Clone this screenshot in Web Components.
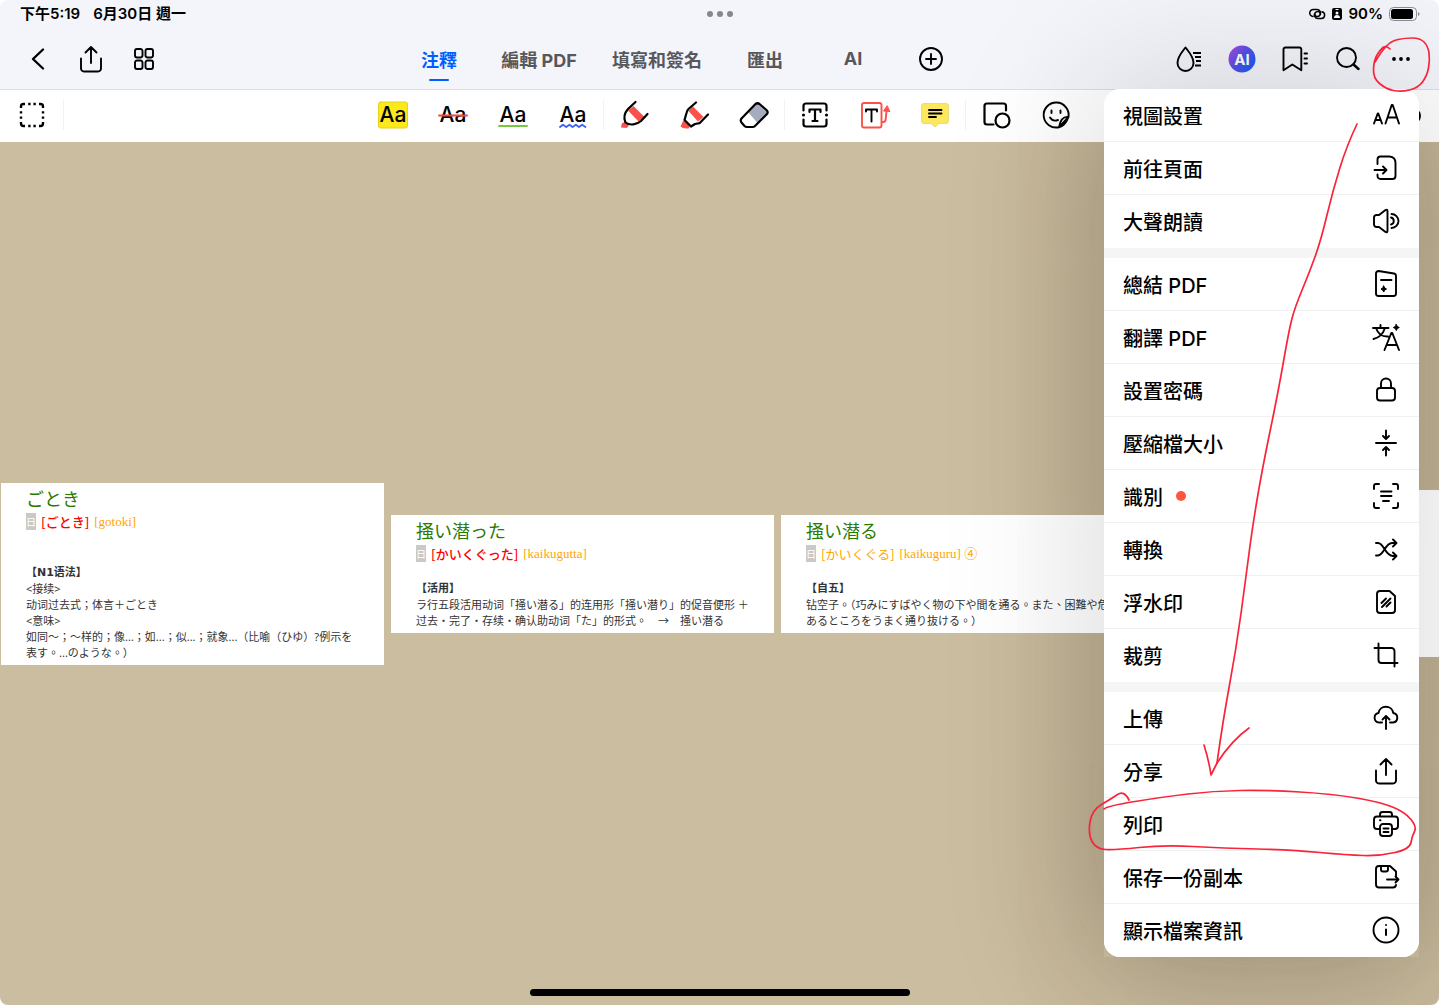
<!DOCTYPE html>
<html lang="zh-Hant">
<head>
<meta charset="utf-8">
<meta name="viewport" content="width=device-width, initial-scale=1">
<title>PDF</title>
<style>
  html, body{
    height: 100%;
    margin: 0;
  }

  body{
    background-color: hsl(0, 0%, 100%);
    color: hsl(0, 0%, 0%);
    font-family: Inter, "Noto Sans CJK TC", sans-serif;
  }
</style>
</head>
<body>

<lector-pdf>
  <barra-estado slot="cabecera"></barra-estado>
  <barra-navegacion slot="cabecera"></barra-navegacion>
  <barra-herramientas slot="cabecera"></barra-herramientas>

  <ficha-pagina palabra="ごとき" espacio="amplio">
    <b slot="lectura">[ごとき]</b>
    <span slot="romaji">[gotoki]</span>
    <strong>【N1语法】</strong><br>
    &lt;接续&gt;<br>
    动词过去式；体言＋ごとき<br>
    &lt;意味&gt;<br>
    如同～；～样的；像...；如...；似...；就象...（比喻（ひゆ）?例示を<br>
    表す。...のような。）
  </ficha-pagina>
  <ficha-pagina palabra="掻い潜った">
    <b slot="lectura">[かいくぐった]</b>
    <span slot="romaji">[kaikugutta]</span>
    <strong>【活用】</strong><br>
    ラ行五段活用动词「掻い潜る」的连用形「掻い潜り」的促音便形 ＋<br>
    过去・完了・存续・确认助动词「た」的形式。　→　掻い潜る
  </ficha-pagina>
  <ficha-pagina palabra="掻い潜る">
    <span slot="lectura">[かいくぐる]</span>
    <span slot="romaji">[kaikuguru] ④</span>
    <strong>【自五】</strong><br>
    钻空子。（巧みにすばやく物の下や間を通る。また、困難や危<br>
    あるところをうまく通り抜ける。）
  </ficha-pagina>
  <ficha-pagina vacia></ficha-pagina>

  <menu-opciones slot="encima"></menu-opciones>
  <trazo-rojo slot="encima"></trazo-rojo>
</lector-pdf>

<script>
// todos los iconos tienen el origen en el centro
const iconos = {
  atras: '<path stroke-width="2.4" d="M5-9.5-5 0 5 9.5"/>',
  compartir: '<path d="M-10-.5v10a3 3 0 0 0 3 3H7a3 3 0 0 0 3-3v-10M0 4v-16M-5.5-6.5 0-12l5.5 5.5"/>',
  cuadricula: '<rect x="-9" y="-10" width="7.5" height="8.5" rx="2"/><rect x="1.5" y="-10" width="7.5" height="8.5" rx="2"/><rect x="-9" y="1.5" width="7.5" height="8.5" rx="2"/><rect x="1.5" y="1.5" width="7.5" height="8.5" rx="2"/>',
  seleccion: '<path stroke-width="2.4" stroke-linecap="butt" d="M-11-7v-1.5A2.5 2.5 0 0 1-8.500-11H-7M7-11h1.500A2.500 2.500 0 0 1 11-8.500V-7M11 7v1.500A2.500 2.500 0 0 1 8.500 11H7M-7 11h-1.500A2.500 2.500 0 0 1-11 8.500V7M-3.800-11h2.400M1.400-11h2.400M-3.800 11h2.400M1.400 11h2.400M-11-3.800v2.400M-11 1.400v2.400M11-3.800v2.400M11 1.400v2.400"/>',
  resaltar: '<rect x="-14.5" y="-13" width="29" height="26" rx="2" fill="#fbe91c" stroke="#e3d21e" stroke-width="1"/><text y="7" font-size="21">Aa</text>',
  tachar: '<text y="7" font-size="21">Aa</text><path stroke="#f4473d" d="M-14 .5h28"/>',
  subrayar: '<text y="7" font-size="21">Aa</text><path stroke="#7ac63c" d="M-14 11h28"/>',
  ondular: '<text y="7" font-size="21">Aa</text><path stroke="#3d62f5" d="M-13 12l3-2.200 3.200 2.200 3.200-2.200L-.400 12l3.200-2.200L6 12l3.200-2.200 3.200 2.200"/>',
  rotulador: '<path fill="#f8524a" stroke="none" d="M-6-4.500-.500-9 10.500 2 4.500 6.500zM-13 12.500l.800-4 3-1.800 4 4-2.200 2.300z"/><path stroke-width="2.2" d="M1.500-13-6-6C-9.500-2-10.500 3-8.500 7.500-4 11 3 9.500 7 6l6.500-7"/>',
  marcador: '<path fill="#f8524a" stroke="none" d="M-5.500-4-1-8.500 9.500 2 4 6.500zM-13.500 11.500l2.800-6 6 4.500v3.200q-6 1-8.800-1.700z"/><path stroke-width="2.2" d="M2-12.500-5.500-6q-1.500 1.500-2 4L-9.500 5l6.500 6.500L1 9l4.500-.800L14-.500"/>',
  borrador: '<path fill="#a6acc0" stroke="none" d="M-6-3 4-12 14-2.500 3.500 8z"/><path stroke-width="2.2" d="M1.500-11q2-1.500 4 0l7 6q2 2 .500 4L1 11q-1 1-2.500 1H-7q-1.500 0-2.500-1l-3-3.500q-1.500-2 0-4z"/>',
  cuadroTexto: '<path stroke-width="2.2" d="M-11.500-4.500V-9a2.500 2.500 0 0 1 2.500-2.500H9A2.500 2.500 0 0 1 11.500-9v4.500M11.500 4.500V9A2.500 2.500 0 0 1 9 11.500H-9A2.500 2.500 0 0 1-11.500 9V4.500M-5.500-3v-2.500h11V-3M0-5.500v11.500M-2.500 6h5"/><circle cx="-11.500" r="1.600" fill="currentColor" stroke="none"/><circle cx="11.500" r="1.600" fill="currentColor" stroke="none"/>',
  llamada: '<path stroke="#f8524a" d="M-11-12H4.500a2 2 0 0 1 2 2v20.500a2 2 0 0 1-2 2H-11a2 2 0 0 1-2-2V-10a2 2 0 0 1 2-2zM7 7h1.500q2 0 2.200-3l.800-8"/><path fill="#f8524a" stroke="#f8524a" stroke-width="1" d="M12-9 8.500-4 14.500-3.500z"/><path d="M-9-3.500v-2H2v2M-3.500-5.500V6.500"/>',
  nota: '<path fill="#fde75c" stroke="#eadb7b" stroke-width="1" d="M-11-11.500h22a2.500 2.500 0 0 1 2.500 2.500V6A2.500 2.500 0 0 1 11 8.500H4L0 12l-4-3.500h-7A2.500 2.500 0 0 1-13.500 6V-9a2.500 2.500 0 0 1 2.500-2.500z"/><path d="M-6-5H6.500M-6-1.500H6.500M-6 2H1"/>',
  formas: '<path stroke-width="2.2" d="M-2.500 9.500H-9A2.500 2.500 0 0 1-11.500 7V-9A2.500 2.500 0 0 1-9-11.500H7.500A2.500 2.500 0 0 1 10-9v4.500"/><circle cx="6.500" cy="5.500" r="7" stroke-width="2.2"/>',
  pegatina: '<path d="M3 12.200A12.500 12.500 0 1 1 12.500 2M3 12.200 12.500 2Q5 1 3 12.200q6-1 9.500-10.200M-4.500-4.500v2.500M4.500-4.500v2.500M-6 2.500q3 4.500 8 2.500"/>',
  mas: '<circle r="11"/><path d="M-5 0H5M0-5V5"/>',
  gota: '<path d="M-3.500-11.500c3 4 8 9 8 15.500a8 8 0 0 1-16 0c0-6.500 5-11.500 8-15.500z"/><path stroke-linecap="butt" d="M4-6h8M6-2h6M7 2h5M6 6.500h6"/>',
  ia: '<circle r="13.500" fill="url(#g)" stroke="none"/><text y="5.500" font-size="15" style="fill:#fff;font-weight:700">AI</text>',
  marcapaginas: '<path d="M-9.500-11.500h14a1.800 1.800 0 0 1 1.800 1.800v21L-2.700 5.500l-8.800 5.800v-21a2 2 0 0 1 2-1.800z"/><path d="M9.500-5.500H12M9.500-.500H12M9.500 4.500H12"/>',
  buscar: '<circle cx="-1.500" cy="-1.500" r="9.500"/><path stroke-width="2.500" d="M5.500 5.500l5 4.500"/>',
  puntos: '<g fill="currentColor" stroke="none"><circle cx="-7" r="1.900"/><circle r="1.900"/><circle cx="7" r="1.900"/></g>',
  circulo: '<circle r="8"/>',
  letras: '<path d="M-12 8.500-8.300-1.500h.600L-4 8.500M-10.800 5h5.600M-.500 8.500 5.700-10h1L13 8.500M1.500 2.500H11"/>',
  irPagina: '<path d="M-8.500-4v-4.500a3 3 0 0 1 3-3h9Q9.500-11 9.500-5V8a3 3 0 0 1-3 3h-12a3 3 0 0 1-3-3V6.500M-11.500 2H.500M-3-1.500.500 2-3 5.500"/>',
  altavoz: '<path d="M-7-6h-2.500a2.500 2.500 0 0 0-2.500 2.500v7A2.500 2.500 0 0 0-9.500 6H-7l6.500 5Q1.500 12 1.500 9.500v-19Q1.500-12-.500-11zM5-3.500a3.600 3.600 0 0 1 0 7M5.500-7a7 7 0 0 1 0 14"/>',
  resumen: '<path d="M-7.500-13 8-10.500a2.500 2.500 0 0 1 2 2.500V9.500a2.500 2.500 0 0 1-2.500 2.500h-15a2.500 2.500 0 0 1-2.500-2.500v-20A2.500 2.500 0 0 1-7.500-13zM-5-4H5.500"/><path fill="currentColor" stroke-width="1" d="M-2.300 2-1.300 4 .500 5-1.300 6-2.300 8-3.300 6-5 5-3.300 4z"/>',
  traducir: '<path d="M-13-9H2.500M-5.500-12v3M-10-9Q-7 0 2-.500M-1-9Q-4 0-12.500 2M-1.500 13 5.300-4h1L13 13M1 8h9.500"/><path fill="currentColor" stroke-width="1" d="M10.300-12.500l1 2 2 1-2 1-1 2-1-2-2-1 2-1z"/>',
  candado: '<rect x="-9" y="-2" width="18" height="12.500" rx="3"/><path d="M-5-2v-4.500a5 5 0 0 1 10 0V-2"/>',
  comprimir: '<path d="M-10 0h20M0-12.500v8.500M-3-7 0-4l3-3M0 12.500V4M-3 7 0 4l3 3"/>',
  escanear: '<path d="M-12-7v-3a2 2 0 0 1 2-2h3M7-12h3a2 2 0 0 1 2 2v3M12 7v3a2 2 0 0 1-2 2H7M-7 12h-3a2 2 0 0 1-2-2V7M-5-4.500H5.500M-5 0H5.500M-3 5H3"/>',
  convertir: '<path d="M-10-6h2C-2-6-1 7 7 7h3M-10 6.500h2C-2 6.500-1-6 6-6h4M7-9.500l3.500 3.500L7-2.500M7 3.500 10.500 7 7 10.500"/>',
  marcaAgua: '<path d="M-6-11H3.500L9-6V8a3 3 0 0 1-3 3H-6a3 3 0 0 1-3-3V-8a3 3 0 0 1 3-3zM-4.500 1 0-3.500M-4 5 4.500-3.500M.500 4.500 4.500.500"/>',
  recortar: '<path d="M-11.500-7H5.500a3 3 0 0 1 3 3V11.500M-7.500-11.500V5a3 3 0 0 0 3 3h16"/>',
  subir: '<path d="M-4 4.500h-3a4.800 4.800 0 0 1-.500-9.500 7.500 7.500 0 0 1 14.800 0A4.800 4.800 0 0 1 7 4.500H4M0 11V-2M-3.500 1.500 0-2l3.500 3.500"/>',
  imprimir: '<path d="M-6-7.500V-9.500A2.500 2.500 0 0 1-3.500-12h7A2.500 2.500 0 0 1 6-9.500v2M-6 5h-3a3 3 0 0 1-3-3v-6.500a3 3 0 0 1 3-3H9a3 3 0 0 1 3 3V2a3 3 0 0 1-3 3H6"/><rect x="-6" y="0" width="12" height="12" rx="3"/><path d="M-2.500 4.500h5M-2.500 8h5M-6-3.800h.500"/>',
  copiar: '<path d="M10-1v-4.500L4-11H-7a3 3 0 0 0-3 3V7.500a3 3 0 0 0 3 3H7a3 3 0 0 0 3-2.500M-5-11v3.500a2 2 0 0 0 2 2h3a2 2 0 0 0 2-2v-3.500M1 2.500h11.500M9.500-.500l3 3-3 3"/>',
  informacion: '<circle r="12.500"/><path stroke-width="2" d="M0-.500v5.500M0-5v.100"/>'
}

class IconoPdf extends HTMLElement {
  constructor () {
    super()
    this.shadow = this.attachShadow({ mode: 'open' })
  }

  connectedCallback () {
    this.render()
  }

  render () {
    this.shadow.innerHTML =
    /*html*/`
    <style>
      :host{
        display: block;
        flex: none;
        height: 28px;
        width: 28px;
      }

      svg{
        display: block;
        fill: none;
        height: 28px;
        overflow: visible;
        stroke: currentColor;
        stroke-linecap: round;
        stroke-linejoin: round;
        stroke-width: 1.9;
        width: 28px;
      }

      text{
        fill: currentColor;
        font-family: Inter, "Noto Sans CJK TC", sans-serif;
        font-weight: 500;
        stroke: none;
        text-anchor: middle;
      }
    </style>
    <svg viewBox="-14 -14 28 28" aria-hidden="true">
      <defs><linearGradient id="g" x1="0" y1="0" x2="1" y2=".7"><stop offset="0" stop-color="#b04be0"/><stop offset=".5" stop-color="#5b4fe6"/><stop offset="1" stop-color="#1c5cf2"/></linearGradient></defs>
      ${iconos[this.getAttribute('nombre')]}
    </svg>
    `
  }
}
customElements.define('icono-pdf', IconoPdf)

class BarraEstado extends HTMLElement {
  constructor () {
    super()
    this.shadow = this.attachShadow({ mode: 'open' })
  }

  connectedCallback () {
    this.render()
  }

  render () {
    this.shadow.innerHTML =
    /*html*/`
    <style>
      :host{
        align-items: center;
        background-color: hsl(230, 38%, 97%);
        display: grid;
        font-size: 15px;
        font-weight: 600;
        grid-template-columns: 1fr auto 1fr;
        height: 28px;
        line-height: 26px;
        padding: 0 19px 0 20px;
      }

      .fecha, .indicadores{
        align-items: center;
        display: flex;
        gap: 13px;
      }

      .puntos{
        display: flex;
        gap: 4px;
      }

      .puntos i{
        background-color: hsl(230, 3%, 54%);
        border-radius: 50%;
        height: 6px;
        width: 6px;
      }

      .indicadores{
        gap: 6px;
        justify-content: end;
      }

      svg{
        display: block;
      }
    </style>

    <div class="fecha"><span>下午5:19</span><span>6月30日 週一</span></div>
    <div class="puntos"><i></i><i></i><i></i></div>
    <div class="indicadores">
      <svg width="17" height="12" viewBox="0 0 17 12" fill="none" stroke="#000" stroke-width="1.500" stroke-linecap="round"><path d="M4 8.500A3.500 3.500 0 0 1 4.500 1.500h3.500a3.600 3.600 0 0 1 3 5.500q-1 1.500-3 1.500a2 2 0 0 1-2-2.500"/><path d="M13 3.800a3.400 3.400 0 0 1-.500 6.700H9A3.500 3.500 0 0 1 6 5q1-1.500 3-1.500a2 2 0 0 1 2 2.500"/></svg>
      <svg width="10" height="12" viewBox="0 0 10 12"><rect width="10" height="12" rx="2"/><path d="M3.500 1.500h3" stroke="#fff"/><circle cx="5" cy="5" r="1.500" fill="#fff"/><path fill="#fff" d="M2 10q0-3 3-3t3 3z"/></svg>
      <span>90%</span>
      <svg width="31" height="14" viewBox="0 0 31 14"><rect x=".5" y=".5" width="27" height="13" rx="4" fill="none" stroke="#8b8c92"/><rect x="2" y="2" width="22" height="10" rx="2.500"/><path fill="#8b8c92" d="M29 5q1.500.5 1.500 2T29 9z"/></svg>
    </div>
    `
  }
}
customElements.define('barra-estado', BarraEstado)

class BarraNavegacion extends HTMLElement {
  constructor () {
    super()
    this.shadow = this.attachShadow({ mode: 'open' })
  }

  connectedCallback () {
    this.render()
  }

  render () {
    this.shadow.innerHTML =
    /*html*/`
    <style>
      :host{
        background-color: hsl(230, 38%, 97%);
        border-bottom: 1px solid hsl(230, 8%, 88%);
        box-sizing: border-box;
        display: flex;
        height: 62px;
        justify-content: space-between;
        padding: 0 12px 0 11px;
      }

      button{
        align-items: center;
        background: none;
        border: none;
        color: inherit;
        display: flex;
        font: inherit;
        justify-content: center;
        padding: 0;
      }

      .grupo{
        display: flex;
      }

      .grupo button{
        width: 53px;
      }

      nav{
        color: hsl(230, 3%, 35%);
        display: grid;
        font-size: 18px;
        font-weight: 700;
        grid-template-columns: 90px 110px 126px 90px 86px 70px;
        padding-left: 28px;
      }

      nav a{
        align-items: center;
        color: inherit;
        display: flex;
        justify-content: center;
        position: relative;
        text-decoration: none;
        white-space: nowrap;
      }

      nav a.activo{
        color: hsl(218, 100%, 50%);
      }

      nav a.activo::after{
        background-color: currentColor;
        border-radius: 1px;
        bottom: 8px;
        content: "";
        height: 2px;
        position: absolute;
        width: 20px;
      }

      nav button{
        color: hsl(0, 0%, 0%);
      }
    </style>

    <div class="grupo">
      <button aria-label="返回"><icono-pdf nombre="atras"></icono-pdf></button>
      <button aria-label="分享"><icono-pdf nombre="compartir"></icono-pdf></button>
      <button aria-label="縮圖"><icono-pdf nombre="cuadricula"></icono-pdf></button>
    </div>
    <nav>
      <a href="#" class="activo">注釋</a>
      <a href="#">編輯 PDF</a>
      <a href="#">填寫和簽名</a>
      <a href="#">匯出</a>
      <a href="#">AI</a>
      <button aria-label="新增"><icono-pdf nombre="mas"></icono-pdf></button>
    </nav>
    <div class="grupo">
      <button aria-label="樣式"><icono-pdf nombre="gota"></icono-pdf></button>
      <button aria-label="AI"><icono-pdf nombre="ia"></icono-pdf></button>
      <button aria-label="書籤"><icono-pdf nombre="marcapaginas"></icono-pdf></button>
      <button aria-label="搜尋"><icono-pdf nombre="buscar"></icono-pdf></button>
      <button aria-label="更多"><icono-pdf nombre="puntos"></icono-pdf></button>
    </div>
    `
  }
}
customElements.define('barra-navegacion', BarraNavegacion)

class BarraHerramientas extends HTMLElement {
  constructor () {
    super()
    this.shadow = this.attachShadow({ mode: 'open' })
    this.grupos = [
      ['resaltar', 'tachar', 'subrayar', 'ondular'],
      ['rotulador', 'marcador', 'borrador'],
      ['cuadroTexto', 'llamada', 'nota'],
      ['formas', 'pegatina']
    ]
  }

  connectedCallback () {
    this.render()
  }

  render () {
    const boton = nombre => `<button aria-label="${nombre}"><icono-pdf nombre="${nombre}"></icono-pdf></button>`

    this.shadow.innerHTML =
    /*html*/`
    <style>
      :host{
        background-color: hsl(0, 0%, 100%);
        display: flex;
        height: 52px;
        overflow: hidden;
      }

      button{
        align-items: center;
        background: none;
        border: none;
        color: inherit;
        display: flex;
        flex: none;
        justify-content: center;
        padding: 0;
        width: 60px;
      }

      .extremo{
        border-right: 1px solid hsl(0, 0%, 95%);
        margin: 10px 0 12px;
        width: 64px;
      }

      .final{
        width: 54px;
      }

      .herramientas{
        display: flex;
        margin: 0 auto;
      }

      .grupo{
        display: flex;
        margin: 10px 0 12px;
      }

      .grupo + .grupo{
        border-left: 1px solid hsl(0, 0%, 95%);
      }
    </style>

    <button class="extremo" aria-label="選取"><icono-pdf nombre="seleccion"></icono-pdf></button>
    <div class="herramientas">
      ${this.grupos.map(grupo => `<div class="grupo">${grupo.map(boton).join('')}</div>`).join('')}
    </div>
    <button class="final" aria-label="復原"><icono-pdf nombre="circulo"></icono-pdf></button>
    `
  }
}
customElements.define('barra-herramientas', BarraHerramientas)

class FichaPagina extends HTMLElement {
  constructor () {
    super()
    this.shadow = this.attachShadow({ mode: 'open' })
  }

  connectedCallback () {
    this.render()
  }

  render () {
    const contenido = this.hasAttribute('vacia')
      ? ''
      : /*html*/`
        <h2>${this.getAttribute('palabra')}</h2>
        <div class="lectura"><i>日</i><slot name="lectura"></slot><slot name="romaji"></slot></div>
        <div class="texto"><slot></slot></div>
      `

    this.shadow.innerHTML =
    /*html*/`
    <style>
      :host{
        background-color: hsl(0, 0%, 100%);
        box-sizing: border-box;
        flex: 0 0 383px;
        overflow: hidden;
        padding: 3px 0 4px 25px;
      }

      :host([vacia]){
        height: 167px;
      }

      h2{
        color: hsl(100, 100%, 24%);
        font-family: "Noto Sans CJK JP", sans-serif;
        font-size: 18px;
        font-weight: 400;
        line-height: 24px;
        margin: 0;
      }

      .lectura{
        align-items: center;
        color: hsl(39, 100%, 50%);
        display: flex;
        font-family: "Noto Sans CJK JP", sans-serif;
        font-size: 13px;
        gap: 5px;
        height: 24px;
        line-height: 24px;
      }

      .lectura i{
        background-color: hsl(0, 0%, 79%);
        color: hsl(0, 0%, 100%);
        font-size: 10px;
        font-style: normal;
        line-height: 17px;
      }

      ::slotted(b){
        color: hsl(0, 100%, 50%);
        font-weight: 500;
      }

      ::slotted([slot="romaji"]){
        font-family: "Liberation Serif", "Noto Sans CJK JP", serif;
      }

      .texto{
        color: hsl(0, 0%, 20%);
        font-family: "Noto Sans", "Noto Sans CJK TC", sans-serif;
        font-size: 11px;
        line-height: 16px;
        padding-top: 14px;
        white-space: nowrap;
      }

      ::slotted(strong){
        font-family: "DejaVu Sans", "Noto Sans CJK TC", sans-serif;
      }

      :host([espacio="amplio"]) .texto{
        padding-top: 30px;
      }
    </style>
    ${contenido}
    `
  }
}
customElements.define('ficha-pagina', FichaPagina)

class MenuOpciones extends HTMLElement {
  constructor () {
    super()
    this.shadow = this.attachShadow({ mode: 'open' })
    this.secciones = [
      [
        ['視圖設置', 'letras'],
        ['前往頁面', 'irPagina'],
        ['大聲朗讀', 'altavoz']
      ],
      [
        ['總結 PDF', 'resumen'],
        ['翻譯 PDF', 'traducir'],
        ['設置密碼', 'candado'],
        ['壓縮檔大小', 'comprimir'],
        ['識別', 'escanear', true],
        ['轉換', 'convertir'],
        ['浮水印', 'marcaAgua'],
        ['裁剪', 'recortar']
      ],
      [
        ['上傳', 'subir'],
        ['分享', 'compartir'],
        ['列印', 'imprimir'],
        ['保存一份副本', 'copiar'],
        ['顯示檔案資訊', 'informacion']
      ]
    ]
  }

  connectedCallback () {
    this.render()
  }

  render () {
    const opcion = ([texto, icono, nuevo]) => /*html*/`
      <li><button><span class="texto">${texto}</span>${nuevo ? '<i></i>' : ''}<icono-pdf nombre="${icono}"></icono-pdf></button></li>
    `

    this.shadow.innerHTML =
    /*html*/`
    <style>
      :host{
        background-color: hsl(0, 0%, 96%);
        border-radius: 16px;
        box-shadow: 0 5px 150px 15px hsla(0, 0%, 0%, 0.15);
        display: flex;
        flex-direction: column;
        gap: 10px;
        position: absolute;
        right: 20px;
        top: 89px;
        width: 315px;
      }

      ul{
        background-color: hsl(0, 0%, 100%);
        list-style: none;
        margin: 0;
        padding: 0;
      }

      ul:first-of-type{
        border-radius: 16px 16px 0 0;
      }

      ul:last-of-type{
        border-radius: 0 0 16px 16px;
      }

      li{
        border-bottom: 1px solid hsl(0, 0%, 94%);
        box-sizing: border-box;
        display: flex;
        height: 53px;
      }

      li:last-child{
        border-bottom-color: transparent;
      }

      button{
        align-items: center;
        background: none;
        border: none;
        color: inherit;
        display: flex;
        flex: 1;
        font: inherit;
        font-size: 20px;
        font-weight: 500;
        gap: 13px;
        padding: 0 19px;
      }

      icono-pdf{
        margin-left: auto;
      }

      i{
        background-color: hsl(8, 100%, 62%);
        border-radius: 50%;
        height: 10px;
        width: 10px;
      }
    </style>

    ${this.secciones.map(seccion => `<ul>${seccion.map(opcion).join('')}</ul>`).join('')}
    `
  }
}
customElements.define('menu-opciones', MenuOpciones)

class TrazoRojo extends HTMLElement {
  constructor () {
    super()
    this.shadow = this.attachShadow({ mode: 'open' })
  }

  connectedCallback () {
    this.render()
  }

  // une los puntos con curvas que pasan por la mitad de cada tramo
  curva (puntos) {
    let d = `M${puntos[0]}`
    for (let i = 1; i < puntos.length - 1; i++) {
      const [x, y] = puntos[i]
      const [sx, sy] = puntos[i + 1]
      d += i === puntos.length - 2 ? `Q${x} ${y} ${sx} ${sy}` : `Q${x} ${y} ${(x + sx) / 2} ${(y + sy) / 2}`
    }
    return d
  }

  render () {
    const trazos = [
      [[1390, 49], [1386, 45], [1380, 50], [1374, 60], [1373, 78], [1386, 89], [1401, 92], [1418, 88], [1427, 76], [1430, 60], [1428, 46], [1420, 38], [1405, 38], [1391, 41], [1381, 52], [1375, 62]],
      [[1357, 124], [1347, 145], [1333, 190], [1321, 240], [1310, 271], [1295, 307], [1289, 330], [1278, 393], [1262, 470], [1252, 530], [1246, 577], [1236, 650], [1223, 720], [1217, 763]],
      [[1217, 763], [1232, 740], [1249, 728]],
      [[1129, 800], [1124, 790], [1111, 799], [1092, 810], [1088, 834], [1096, 849], [1115, 850], [1163, 845], [1223, 848], [1293, 850], [1347, 855], [1380, 856], [1410, 849], [1412, 836], [1417, 827], [1405, 812], [1380, 802], [1333, 794], [1267, 790], [1213, 791], [1163, 797], [1107, 806], [1104, 809]]
    ]

    this.shadow.innerHTML =
    /*html*/`
    <style>
      :host{
        pointer-events: none;
        position: absolute;
        right: 0;
        top: 0;
      }

      svg{
        display: block;
        fill: none;
        height: 1005px;
        stroke: hsl(354, 95%, 56%);
        stroke-linecap: round;
        stroke-linejoin: round;
        stroke-width: 1.7;
        width: 359px;
      }
    </style>
    <svg viewBox="1080 0 359 1005" aria-hidden="true">
      ${trazos.map(trazo => `<path d="${this.curva(trazo)}"/>`).join('')}
      <path d="M1204 745Q1209 761 1211 775L1217 763"/>
    </svg>
    `
  }
}
customElements.define('trazo-rojo', TrazoRojo)

class LectorPdf extends HTMLElement {
  constructor () {
    super()
    this.shadow = this.attachShadow({ mode: 'open' })
  }

  connectedCallback () {
    this.render()
  }

  render () {
    this.shadow.innerHTML =
    /*html*/`
    <style>
      :host{
        border-radius: 8px;
        display: flex;
        flex-direction: column;
        height: 100vh;
        overflow: hidden;
        position: relative;
      }

      main{
        align-items: center;
        background-color: hsl(41, 30%, 71%);
        display: flex;
        flex: 1;
        gap: 7px;
        overflow: hidden;
        padding-left: 1px;
        position: relative;
      }

      /* el fondo se oscurece mas que las fichas bajo el menu */
      main::before{
        bottom: 48px;
        box-shadow: 0 0 130px 10px hsla(46, 60%, 12%, 0.16);
        content: "";
        position: absolute;
        right: 20px;
        top: -53px;
        width: 315px;
      }

      main ::slotted(*){
        position: relative;
      }

      .inicio{
        background-color: hsl(0, 0%, 0%);
        border-radius: 4px;
        bottom: 9px;
        height: 7px;
        left: 0;
        margin: 0 auto;
        position: absolute;
        right: 0;
        width: 380px;
      }
    </style>

    <slot name="cabecera"></slot>
    <main><slot></slot></main>
    <slot name="encima"></slot>
    <div class="inicio"></div>
    `
  }
}
customElements.define('lector-pdf', LectorPdf)
</script>
</body>
</html>
